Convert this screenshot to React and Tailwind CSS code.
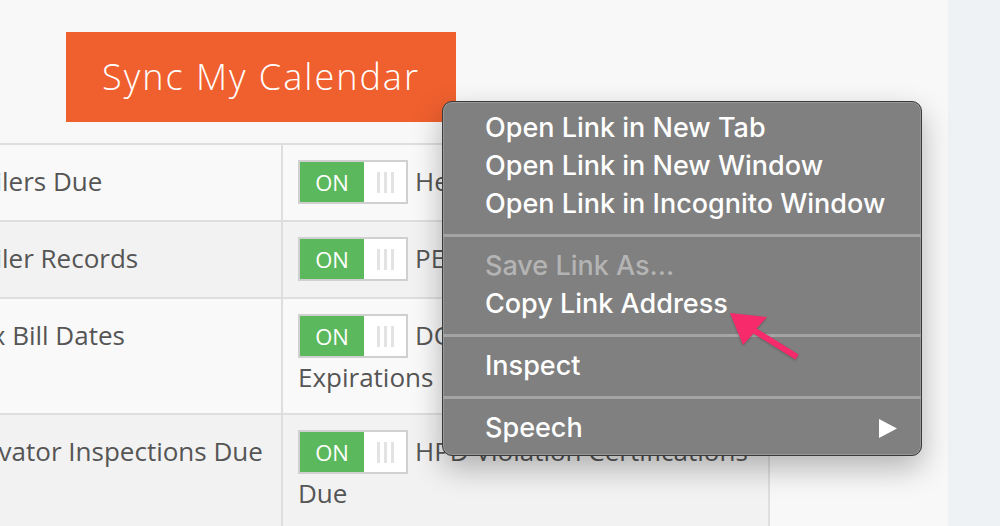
const rows = [
  { left: 'Boilers Due', right: 'Heating Season Notices', bg: 'bg-[#f9f9f9]' },
  { left: 'Boiler Records', right: 'PE Filings Due', bg: 'bg-[#f2f2f2]' },
  { left: 'Tax Bill Dates', right: 'DOB License and Permit Expirations', bg: 'bg-[#f9f9f9]' },
  { left: 'Elevator Inspections Due', right: 'HPD Violation Certifications Due', bg: 'bg-[#f2f2f2]' },
];

function Toggle() {
  return (
    <span className="inline-flex align-middle h-[44px] w-[110px] border-2 border-[#d0d0d0] bg-white mr-[7px] -mt-[4px]">
      <span className="flex items-center justify-center w-[64px] bg-[#5cb85c] text-white text-[22px] leading-none">ON</span>
      <span className="flex flex-1 items-center justify-center gap-[4px]">
        <span className="w-[3px] h-[21px] bg-[#e3e3e3]" />
        <span className="w-[3px] h-[21px] bg-[#e3e3e3]" />
        <span className="w-[3px] h-[21px] bg-[#e3e3e3]" />
      </span>
    </span>
  );
}

function MenuItem({ children, muted }) {
  return (
    <div className={`pl-[42px] leading-[38px] text-[27px] font-medium ${muted ? 'text-[#b4b4b4]' : 'text-white'}`}>
      {children}
    </div>
  );
}

function Separator() {
  return <div className="mt-[11px] mb-[10px] h-[3px] bg-[#a4a4a4]" />;
}

export default function App() {
  return (
    <div className="relative flex w-[1000px] h-[526px] overflow-hidden bg-[#f8f8f8] font-['Open_Sans',sans-serif]">
      {/* ── Main column ───────────────────────────── */}
      <div className="w-[948px] flex flex-col">
        <div className="pt-[32px] pl-[66px]">
          <button className="w-[390px] h-[90px] bg-[#f0602e] text-white text-[36px] font-light tracking-[2px] font-['Open_Sans',sans-serif]">
            Sync My Calendar
          </button>
        </div>

        <div className="mt-[21px] -ml-[55px] w-[825px] border-t-2 border-[#dedede] text-[26px] text-[#555]">
          {rows.map((r) => (
            <div key={r.left} className={`flex border-b-2 border-[#dedede] ${r.bg}`}>
              <div className="w-[338px] shrink-0 border-r-2 border-[#dedede] pl-[18px] pt-[17px] leading-[38px]">
                {r.left}
              </div>
              <div className="w-[487px] border-r-2 border-[#dedede] pl-[15px] pr-[10px] pt-[17px] pb-[16px] leading-[39px]">
                <Toggle />
                {r.right}
              </div>
            </div>
          ))}
        </div>
      </div>

      {/* ── Right strip ───────────────────────────── */}
      <div className="flex-1 bg-[#eff2f5]" />

      {/* ── Context menu ──────────────────────────── */}
      <div className="absolute left-[442px] top-[101px] w-[480px] h-[355px] rounded-[10px] bg-[#808080] border border-[#3a3a3a] pt-[7px] shadow-[inset_0_0_0_1px_rgba(255,255,255,0.18),0_12px_30px_rgba(0,0,0,0.28)] font-['Inter',sans-serif]">
        <MenuItem>Open Link in New Tab</MenuItem>
        <MenuItem>Open Link in New Window</MenuItem>
        <MenuItem>Open Link in Incognito Window</MenuItem>
        <Separator />
        <MenuItem muted>Save Link As...</MenuItem>
        <MenuItem>Copy Link Address</MenuItem>
        <Separator />
        <MenuItem>Inspect</MenuItem>
        <Separator />
        <div className="flex items-center justify-between pr-[24px]">
          <MenuItem>Speech</MenuItem>
          <svg width="18" height="19" viewBox="0 0 18 19">
            <polygon points="0,0 18,9.5 0,19" fill="white" />
          </svg>
        </div>
      </div>

      {/* ── Annotation arrow ──────────────────────── */}
      <svg className="absolute left-[725px] top-[308px]" width="80" height="56" viewBox="0 0 80 56">
        <polygon
          points="5,5 42,9 31.6,20.5 73.6,46.5 70.4,51.5 28.4,25.5 18,37"
          fill="#f72a6b"
          style={{ filter: 'drop-shadow(0 1px 1px rgba(0,0,0,0.25))' }}
        />
      </svg>
    </div>
  );
}
